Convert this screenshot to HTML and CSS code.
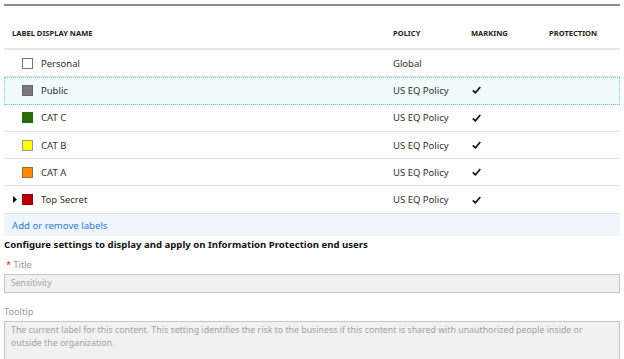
FILE: index.html
```html
<!DOCTYPE html>
<html>
<head>
<meta charset="utf-8">
<link rel="stylesheet" href="styles.css">
</head>
<body>
<div class="page">
  <div class="table">
    <div class="row head">
      <div class="c name">LABEL DISPLAY NAME</div>
      <div class="c">POLICY</div>
      <div class="c">MARKING</div>
      <div class="c">PROTECTION</div>
    </div>
    <div class="row">
      <div class="c name"><span class="exp"></span><span class="sw sw-personal"></span>Personal</div>
      <div class="c">Global</div>
      <div class="c"></div>
      <div class="c"></div>
    </div>
    <div class="row sel">
      <div class="c name"><span class="exp"></span><span class="sw sw-public"></span>Public</div>
      <div class="c">US EQ Policy</div>
      <div class="c"><svg class="chk" viewBox="0 0 9 8" width="9" height="8"><path d="M0.8 4.3 L3.4 6.8 L8.3 1" fill="none" stroke="#111" stroke-width="1.7"/></svg></div>
      <div class="c"></div>
    </div>
    <div class="row">
      <div class="c name"><span class="exp"></span><span class="sw sw-catc"></span>CAT C</div>
      <div class="c">US EQ Policy</div>
      <div class="c"><svg class="chk" viewBox="0 0 9 8" width="9" height="8"><path d="M0.8 4.3 L3.4 6.8 L8.3 1" fill="none" stroke="#111" stroke-width="1.7"/></svg></div>
      <div class="c"></div>
    </div>
    <div class="row">
      <div class="c name"><span class="exp"></span><span class="sw sw-catb"></span>CAT B</div>
      <div class="c">US EQ Policy</div>
      <div class="c"><svg class="chk" viewBox="0 0 9 8" width="9" height="8"><path d="M0.8 4.3 L3.4 6.8 L8.3 1" fill="none" stroke="#111" stroke-width="1.7"/></svg></div>
      <div class="c"></div>
    </div>
    <div class="row">
      <div class="c name"><span class="exp"></span><span class="sw sw-cata"></span>CAT A</div>
      <div class="c">US EQ Policy</div>
      <div class="c"><svg class="chk" viewBox="0 0 9 8" width="9" height="8"><path d="M0.8 4.3 L3.4 6.8 L8.3 1" fill="none" stroke="#111" stroke-width="1.7"/></svg></div>
      <div class="c"></div>
    </div>
    <div class="row">
      <div class="c name"><span class="exp"><svg viewBox="0 0 4 7" width="4" height="7"><path d="M0 0 L4 3.5 L0 7 Z" fill="#111"/></svg></span><span class="sw sw-top"></span>Top Secret</div>
      <div class="c">US EQ Policy</div>
      <div class="c"><svg class="chk" viewBox="0 0 9 8" width="9" height="8"><path d="M0.8 4.3 L3.4 6.8 L8.3 1" fill="none" stroke="#111" stroke-width="1.7"/></svg></div>
      <div class="c"></div>
    </div>
    <div class="addbar"><a class="link">Add or remove labels</a></div>
  </div>
  <div class="section-title">Configure settings to display and apply on Information Protection end users</div>
  <div class="label"><span class="req">*</span> Title</div>
  <div class="input">Sensitivity</div>
  <div class="label tip">Tooltip</div>
  <div class="textarea">The current label for this content. This setting identifies the risk to the business if this content is shared with unauthorized people inside or outside the organization.</div>
</div>
</body>
</html>
```
FILE: styles.css
```css
html, body {
  margin: 0;
  padding: 0;
  background: #fff;
}
body {
  font-family: "Noto Sans", "Open Sans", sans-serif;
  font-size: 9.5px;
  color: #2f2f2f;
}
.page {
  padding: 4px 4px 0 4px;
  width: 616px;
}
.table {
  border-top: 2px solid #8c8c8c;
}
.row {
  display: grid;
  grid-template-columns: 389px 78px 78px 71px;
  height: 27.3px;
  box-sizing: border-box;
  border-bottom: 1px solid #e3e3e3;
  align-items: center;
}
.row.head {
  height: 44px;
  border-bottom: 2px solid #e6e6e6;
  font-size: 7.55px;
  font-weight: bold;
  color: #222;
  padding-top: 11px;
}
.row.head .name {
  padding-left: 8px;
}
.c {
  display: flex;
  align-items: center;
  white-space: nowrap;
}
.name {
  padding-left: 9px;
}
.exp {
  width: 9px;
  display: inline-flex;
  align-items: center;
}
.sw {
  width: 11px;
  height: 11px;
  box-sizing: border-box;
  margin-right: 8px;
  border: 1px solid transparent;
}
.sw-personal { background: #fff; border-color: #777; }
.sw-public { background: #7a7a7a; border-color: #666; }
.sw-catc { background: #2b6a0c; border-color: #2b6a0c; }
.sw-catb { background: #ffff00; border-color: #999; }
.sw-cata { background: #ff8a00; border-color: #a06a30; }
.sw-top { background: #b30000; border-color: #900; }
.row.sel {
  background: #f1fbfe;
  outline: 1px dotted #6fcbe6;
  outline-offset: -1px;
}
.chk {
  margin-left: 1px;
}
.addbar {
  height: 22px;
  margin-top: 0.5px;
  background: #eef5fd;
  display: flex;
  align-items: center;
  padding-left: 8px;
}
.link {
  color: #2e7bd4;
  font-size: 9.6px;
}
.section-title {
  font-weight: bold;
  color: #111;
  font-size: 9.6px;
  margin-top: 1px;
  height: 16px;
  line-height: 16px;
}
.label {
  color: #9a9a9a;
  font-size: 9.2px;
  height: 14px;
  line-height: 14px;
  margin-top: 5px;
  padding-left: 2px;
}
.label.tip {
  padding-left: 0;
  margin-top: 12px;
}
.req {
  color: #d22;
}
.input {
  margin-top: 2px;
  height: 19px;
  box-sizing: border-box;
  border: 1px solid #c6c6c6;
  background: #f1f1f1;
  color: #a2a2a2;
  padding-left: 6px;
  line-height: 17px;
  font-size: 8.6px;
}
.textarea {
  margin-top: 2px;
  height: 41px;
  box-sizing: border-box;
  border: 1px solid #c6c6c6;
  border-bottom-width: 0;
  background: #f1f1f1;
  color: #a2a2a2;
  padding: 2px 6px 0 6px;
  line-height: 13px;
  font-size: 8.8px;
  overflow: hidden;
}
```
